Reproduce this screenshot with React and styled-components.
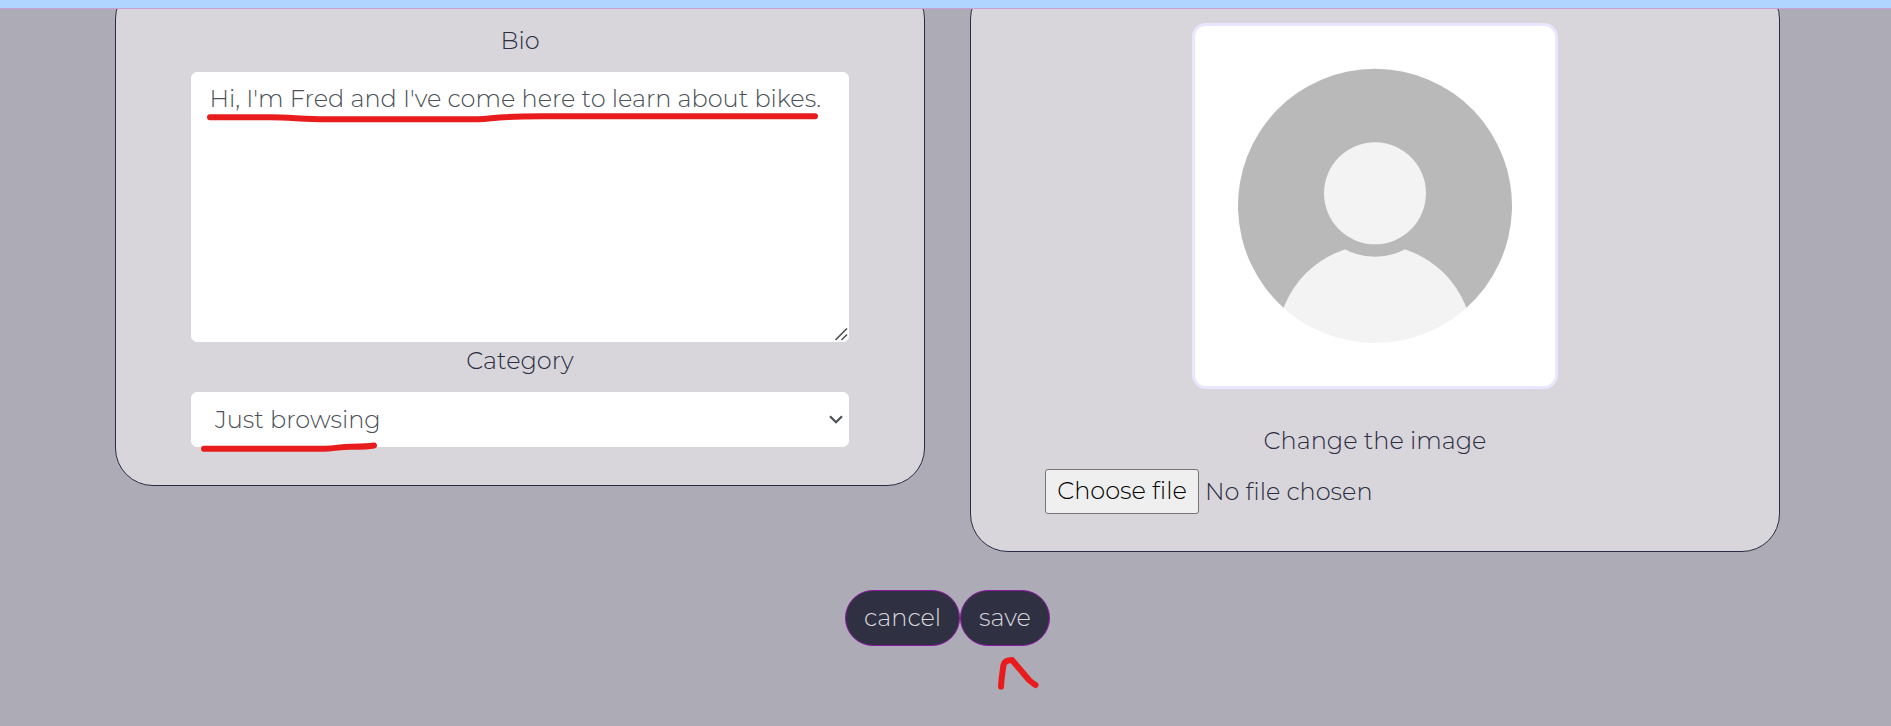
import React from "react";
import styled, { createGlobalStyle } from "styled-components";

const GlobalStyle = createGlobalStyle`
  *, *::before, *::after { box-sizing: border-box; }
  body {
    margin: 0;
    background: #adabb5;
    color: #2b2d42;
    font-family: Montserrat, Inter, sans-serif;
    font-size: 24px;
    font-weight: 300;
    line-height: 36px;
  }
`;

const Page = styled.div`
  position: relative;
  height: 726px;
  overflow: hidden;
  display: flex;
  flex-direction: column;
`;

const TopBar = styled.header`
  height: 9px;
  flex: none;
  background: #b0d5ff;
  border-bottom: 1px solid #c99fd6;
`;

const Content = styled.main`
  flex: 1;
  min-height: 0;
  overflow: hidden;
  padding-left: 115px;
`;

const Columns = styled.div`
  display: flex;
  align-items: flex-start;
  gap: 45px;
  margin-top: -28px;
`;

const Card = styled.section`
  width: 810px;
  height: ${({ $height }) => $height}px;
  padding: ${({ $top }) => $top}px 75px 0;
  display: flex;
  flex-direction: column;
  background: #d8d6db;
  border: 1px solid #2b2d42;
  border-radius: 38px;
`;

const Label = styled.label`
  text-align: center;
  height: 38px;
  line-height: 38px;
`;

const BioWrap = styled.div`
  position: relative;
  margin-top: 12px;
  height: 270px;
`;

const BioField = styled.textarea`
  display: block;
  width: 658px;
  height: 270px;
  padding: 8px 17.5px;
  border: 1px solid #fff;
  border-radius: 6px;
  background: #fff;
  color: #495057;
  font: inherit;
  resize: none;
  outline: none;
`;

const Grip = styled.svg`
  position: absolute;
  right: 1px;
  bottom: 1px;
`;

const SelectWrap = styled.div`
  position: relative;
  margin-top: 12px;
  height: 55px;
`;

const Select = styled.select`
  appearance: none;
  width: 658px;
  height: 55px;
  padding: 0 23px;
  border: 1px solid #fff;
  border-radius: 6px;
  background: #fff;
  color: #495057;
  font: inherit;
`;

const Chevron = styled.svg`
  position: absolute;
  right: 6px;
  top: 23px;
  pointer-events: none;
`;

const Avatar = styled.div`
  width: 366px;
  height: 366px;
  align-self: center;
  overflow: hidden;
  background: #fff;
  border: 3px solid #e9e6ff;
  border-radius: 14px;
  svg { display: block; }
`;

const ImageLabel = styled(Label)`
  margin-top: 33px;
`;

const FilePicker = styled.div`
  display: flex;
  align-items: center;
  gap: 6px;
  margin: 9px 0 0 -1px;
`;

const FileButton = styled.button`
  width: 154px;
  height: 45px;
  padding: 0 0 2px;
  background: #efefef;
  border: 1px solid #767676;
  border-radius: 3px;
  color: #000;
  font: inherit;
`;

const Actions = styled.div`
  width: 1665px;
  display: flex;
  justify-content: center;
  margin-top: 38px;
`;

const PillButton = styled.button`
  width: ${({ $width }) => $width}px;
  height: 56px;
  padding: 0;
  background: #2f3142;
  border: 1px solid #8d18a5;
  border-radius: 28px;
  color: #d8d6db;
  font: inherit;
`;

const Marks = styled.svg`
  position: absolute;
  inset: 0;
  pointer-events: none;
`;

function Person() {
  return (
    <svg width="360" height="360" viewBox="1195 26 360 360">
      <defs>
        <clipPath id="shoulders"><circle cx="1375" cy="342.5" r="97.8" /></clipPath>
      </defs>
      <path d="M1283.500 307.700A137 137 0 1 1 1466.500 307.700Z" fill="#b9b9b9" />
      <g clipPath="url(#shoulders)">
        <circle cx="1375" cy="206" r="137" fill="#f3f3f3" />
      </g>
      <circle cx="1375" cy="193.3" r="63.5" fill="#b9b9b9" />
      <circle cx="1375" cy="193.3" r="51" fill="#f3f3f3" />
    </svg>
  );
}

export default function App() {
  return (
    <Page>
      <GlobalStyle />
      <TopBar />
      <Content>
        <Columns>
          <Card $height={505} $top={40}>
            <Label htmlFor="bio">Bio</Label>
            <BioWrap>
              <BioField id="bio" spellCheck={false} defaultValue="Hi, I'm Fred and I've come here to learn about bikes." />
              <Grip width="13" height="13" viewBox="0 0 13 13" fill="none" stroke="#555" strokeWidth="1.6">
                <path d="M0.500 12 12 0.500M6.500 12 12 6.500" />
              </Grip>
            </BioWrap>
            <Label htmlFor="category">Category</Label>
            <SelectWrap>
              <Select id="category" defaultValue="browsing">
                <option value="browsing">Just browsing</option>
              </Select>
              <Chevron width="14" height="10" viewBox="0 0 14 10" fill="none" stroke="#495057" strokeWidth="2.2">
                <path d="M1 1.3 7 7.3 13 1.3" />
              </Chevron>
            </SelectWrap>
          </Card>
          <Card $height={571} $top={41}>
            <Avatar><Person /></Avatar>
            <ImageLabel as="div">Change the image</ImageLabel>
            <FilePicker>
              <FileButton type="button">Choose file</FileButton>
              <span>No file chosen</span>
            </FilePicker>
          </Card>
        </Columns>
        <Actions>
          <PillButton $width={115}>cancel</PillButton>
          <PillButton $width={90}>save</PillButton>
        </Actions>
      </Content>
      <Marks width="1891" height="726" viewBox="0 0 1891 726" fill="none" stroke="#e81c1c" strokeWidth="6" strokeLinecap="round" strokeLinejoin="round">
        <path d="M210 117.3H270C290 117.5 305 119.3 326 119.3H478C490 119 493 117.3 508 117C525 116 535 116.3 560 116.3H815" />
        <path d="M204 448.7H325C337 448.5 340 446.5 352 446.7C362 446.7 368 446.7 374 445.5" />
        <path d="M1001 686.5C1001.5 677 1002.5 672 1003.5 665C1004.5 661 1008 660 1012 660L1029 680Q1031 682 1035.500 685" />
      </Marks>
    </Page>
  );
}
